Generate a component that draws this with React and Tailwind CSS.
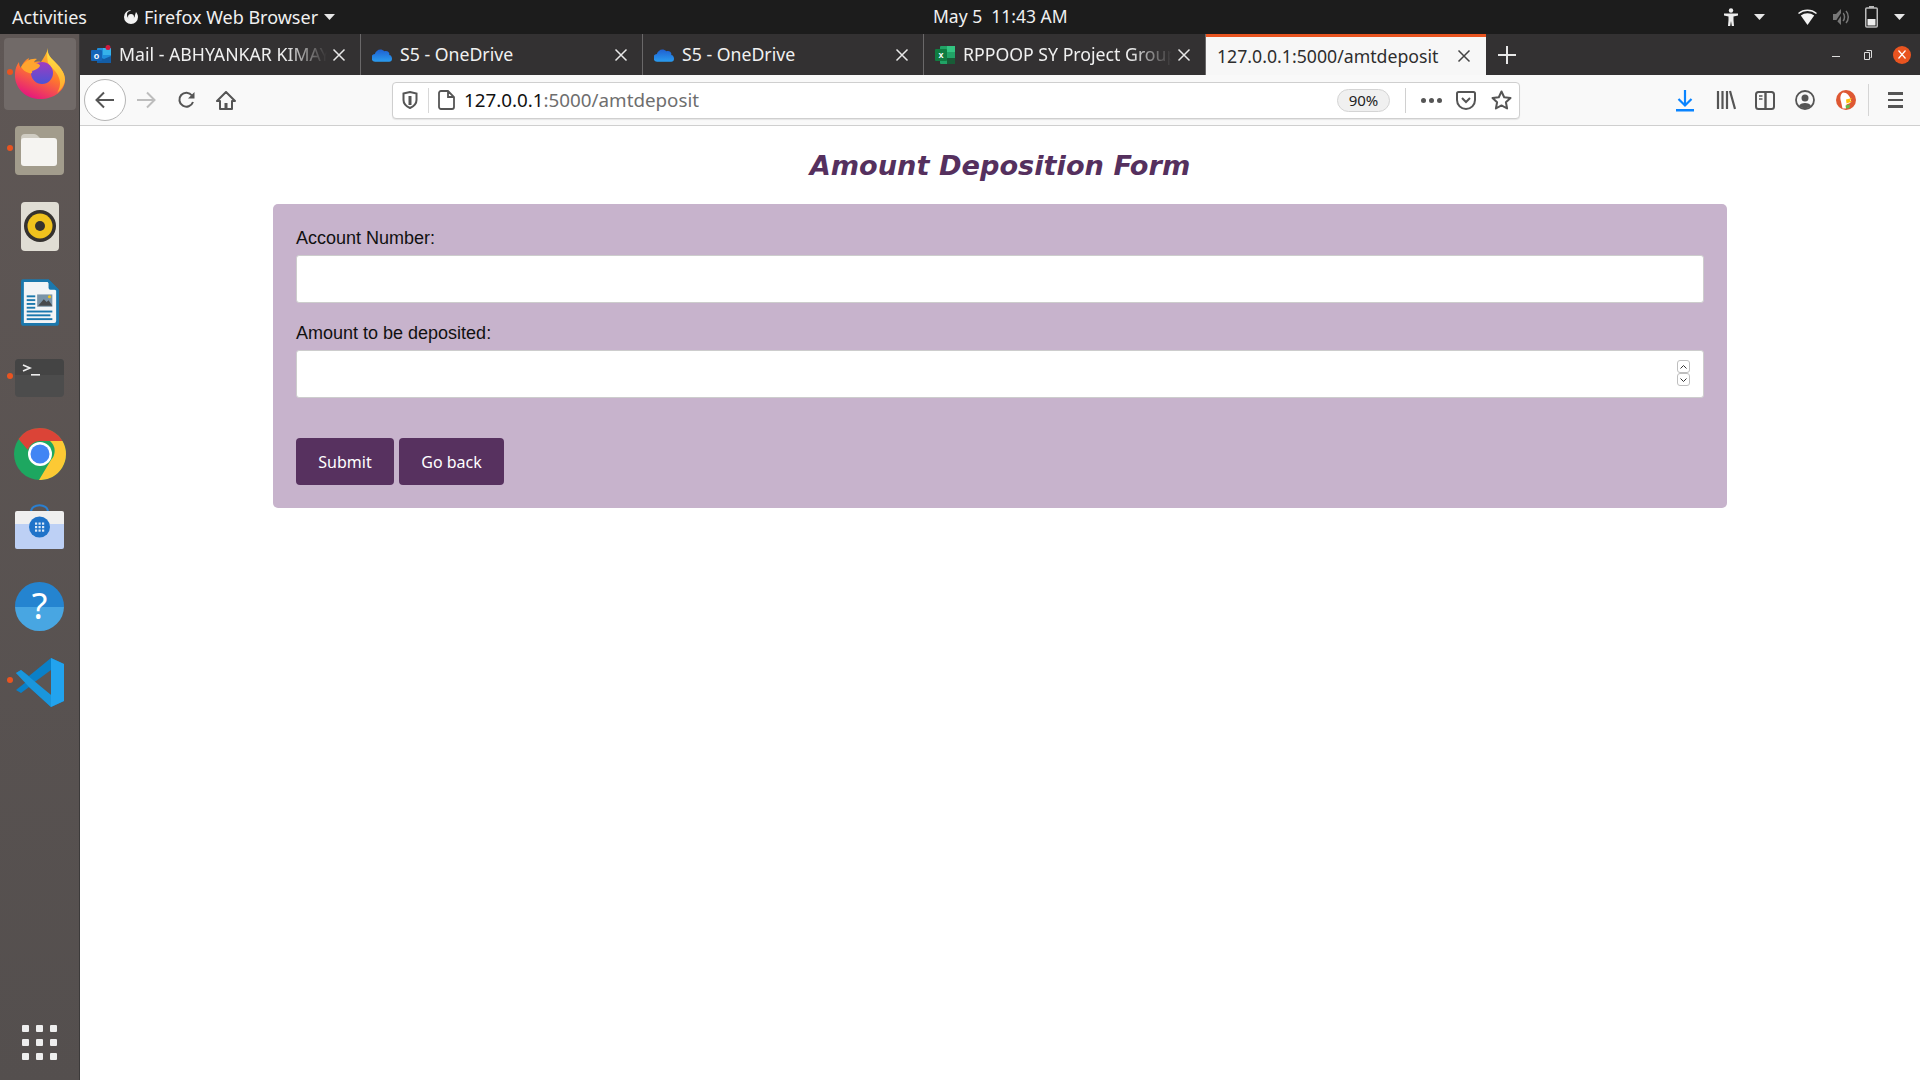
import React from 'react';

const uiFont = "font-['Noto_Sans',sans-serif]";

// dock icons
const FirefoxIcon = () => (
  <svg width="50" height="52" viewBox="0 0 50 52">
    <defs>
      <linearGradient id="ffBody" x1="0.8" y1="0" x2="0.35" y2="1">
        <stop offset="0" stopColor="#ffd02e" />
        <stop offset="0.5" stopColor="#ff7a2b" />
        <stop offset="1" stopColor="#e5177e" />
      </linearGradient>
      <linearGradient id="ffTop" x1="0.5" y1="0" x2="0.5" y2="1">
        <stop offset="0" stopColor="#ffe84a" />
        <stop offset="1" stopColor="#ffa52a" />
      </linearGradient>
      <linearGradient id="ffGlobe" x1="0.5" y1="0" x2="0.5" y2="1">
        <stop offset="0" stopColor="#a03cc0" />
        <stop offset="1" stopColor="#4b53d6" />
      </linearGradient>
    </defs>
    <path d="M33 1c-1 6 2 9 6 13 5 5 11 11 11 19 0 11-11 19-25 19C11 52 1 42 0 30c-.4-6 1-11 4-15 0 3 1 5 2 6 1-4 4-8 8-10-1 3 0 5 1 6 3-2 7-3 11-2 3-5 6-9 7-14z" fill="url(#ffBody)" />
    <path d="M33 1c-1 6 2 9 6 13 5 5 11 11 11 19-1 6-4 10-8 13 3-5 4-10 2-15-2-7-8-10-11-15-1-5-1-10 0-15z" fill="url(#ffTop)" />
    <circle cx="27" cy="26" r="11" fill="url(#ffGlobe)" />
    <path d="M6 20c4-6 10-9 16-8-2 1-3 3-3 4 3 0 6 1 6 3-2 3-5 4-8 5 1 2-1 3-3 2-4-1-6-3-8-6z" fill="#ffa52e" />
  </svg>
);

const FilesIcon = () => (
  <div className="w-[49px] h-[49px] rounded bg-[#a29c8c] flex items-center justify-center">
    <svg width="37" height="33" viewBox="0 0 37 33">
      <path d="M0 4a4 4 0 0 1 4-4h9c2 0 3 1 4 2l3 3H4a4 4 0 0 0-4 3z" fill="#cfccc2" />
      <rect x="0" y="4" width="36" height="28" rx="3" fill="#f5f4f1" />
    </svg>
  </div>
);

const RhythmboxIcon = () => (
  <div className="w-[38px] h-[49px] rounded bg-[#e0ddd4] flex items-center justify-center">
    <svg width="32" height="32" viewBox="0 0 32 32">
      <circle cx="16" cy="16" r="16" fill="#35322f" />
      <circle cx="16" cy="16" r="12.5" fill="#f0c21d" />
      <circle cx="16" cy="16" r="5" fill="#35322f" />
    </svg>
  </div>
);

const WriterIcon = () => (
  <svg width="38" height="49" viewBox="0 0 40 49">
    <path d="M2 0h27l11 11v35a3 3 0 0 1-3 3H3a3 3 0 0 1-3-3V2a2 2 0 0 1 2-2z" fill="#1b78ad" />
    <path d="M3 3h25l9 9v32a2 2 0 0 1-2 2H3z" fill="#f2f4f6" />
    <path d="M29 0l11 11h-9a2 2 0 0 1-2-2z" fill="#1b78ad" />
    <rect x="6" y="17" width="9" height="2" fill="#1b78ad" />
    <rect x="6" y="21" width="9" height="2" fill="#1b78ad" />
    <rect x="6" y="25" width="9" height="2" fill="#1b78ad" />
    <rect x="6" y="29" width="9" height="2" fill="#1b78ad" />
    <rect x="17" y="16" width="16" height="13" fill="#7a94a8" />
    <path d="M18 28l6-7 3 3 2-2 4 6z" fill="#46494c" />
    <circle cx="30" cy="18.5" r="1.6" fill="#f0c21d" />
    <rect x="6" y="33" width="27" height="2" fill="#1b78ad" />
    <rect x="6" y="37" width="25" height="2" fill="#1b78ad" />
    <rect x="6" y="41" width="27" height="2" fill="#1b78ad" />
  </svg>
);

const TerminalIcon = () => (
  <div className="w-[49px] h-[38px] rounded bg-[#4c4c4c] overflow-hidden relative">
    <div className="h-[16px] bg-[#444444]" />
    <svg className="absolute left-0 top-0" width="49" height="20" viewBox="0 0 49 20">
      <path d="M8 6l7 3-7 3" fill="none" stroke="#eee" strokeWidth="1.6" />
      <rect x="16" y="15" width="9" height="1.6" fill="#eee" />
    </svg>
  </div>
);

const ChromeIcon = () => (
  <svg width="52" height="52" viewBox="0 0 52 52">
    <circle cx="26" cy="26" r="26" fill="#1da760" />
    <path d="M26 0a26 26 0 0 1 22.5 13H26a13 13 0 0 0-12.300 8.700L4.500 11A26 26 0 0 1 26 0z" fill="#db4437" />
    <path d="M48.500 13A26 26 0 0 1 25 52l12-20a13 13 0 0 0-1-19z" fill="#fcc934" />
    <circle cx="26" cy="26" r="12" fill="#fff" />
    <circle cx="26" cy="26" r="9.500" fill="#4285f4" />
  </svg>
);

const SoftwareIcon = () => (
  <svg className="mb-[8px]" width="49" height="46" viewBox="0 0 49 46">
    <path d="M16 9c0-9 17-9 17 0" fill="none" stroke="#2a7fd0" strokeWidth="2" />
    <path d="M2 8h45a2 2 0 0 1 2 2v11H0V10a2 2 0 0 1 2-2z" fill="#efefef" />
    <path d="M0 21h49v23a2 2 0 0 1-2 2H2a2 2 0 0 1-2-2z" fill="#bdd0f5" />
    <circle cx="24.500" cy="24" r="10.500" fill="#1f73c9" />
    {[0, 1, 2].map((r) =>
      [0, 1, 2].map((c) => (
        <rect key={r + '-' + c} x={20 + c * 3.500} y={19.500 + r * 3.500} width="2.200" height="2.200" fill="#dce9f8" />
      ))
    )}
  </svg>
);

const HelpIcon = () => (
  <div className="w-[49px] h-[49px] rounded-full bg-gradient-to-b from-[#2484d0] from-50% to-[#48a6e2] to-50% flex items-center justify-center">
    <span className="text-white text-[36px] leading-none font-['Noto_Sans',sans-serif]">?</span>
  </div>
);

const VSCodeIcon = () => (
  <svg width="50" height="49" viewBox="0 0 50 49">
    <path d="M36 0l13 6v37l-13 6-22-20-8 6-5-3 10-8L1 15l5-3 8 6z" fill="#0a80c8" />
    <path d="M36 0l13 6v37l-13 6z" fill="#22a3ee" />
    <path d="M36 12L19 24.500 36 37z" fill="#5c5553" />
    <path d="M1 15l5-3 30 25v12L14 29z" fill="#1a96dc" />
  </svg>
);

const dockItems = [
  { key: 'firefox', icon: <FirefoxIcon />, running: true, active: true },
  { key: 'files', icon: <FilesIcon />, running: true },
  { key: 'music', icon: <RhythmboxIcon /> },
  { key: 'writer', icon: <WriterIcon /> },
  { key: 'terminal', icon: <TerminalIcon />, running: true },
  { key: 'chrome', icon: <ChromeIcon /> },
  { key: 'software', icon: <SoftwareIcon /> },
  { key: 'help', icon: <HelpIcon /> },
  { key: 'vscode', icon: <VSCodeIcon />, running: true },
];

const Dock = () => (
  <aside className="w-[80px] shrink-0 bg-gradient-to-b from-[#5f5755] to-[#544f4e] border-r border-[#3c3a3a] flex flex-col items-center pt-[2px] pb-[20px] h-full">
    {dockItems.map((item) => (
      <div key={item.key} className="relative w-[72px] h-[76px] flex items-center justify-center">
        {item.active && <div className="absolute inset-x-0 top-[2px] h-[72px] rounded bg-[#716a68]" />}
        {item.running && <div className="absolute left-[3px] top-[33px] w-[6px] h-[6px] rounded-full bg-[#e95420]" />}
        <div className={item.active ? 'relative -mt-[2px]' : 'relative'}>{item.icon}</div>
      </div>
    ))}
    <div className="mt-auto grid grid-cols-3 gap-[7px]">
      {Array.from({ length: 9 }).map((_, i) => (
        <div key={i} className="w-[7px] h-[7px] rounded-[1px] bg-[#eeeeee]" />
      ))}
    </div>
  </aside>
);

const Caret = ({ className = '' }) => (
  <svg className={className} width="11" height="6" viewBox="0 0 11 6">
    <path d="M0 0h11L5.500 6z" fill="#e6e6e6" />
  </svg>
);

const TopBar = () => (
  <header className={`h-[34px] shrink-0 bg-[#1c1c1c] flex items-center text-[#f0f0f0] text-[18px] relative ${uiFont}`}>
    <span className="ml-[12px] w-[111px]">Activities</span>
    <svg width="16" height="16" viewBox="0 0 16 16">
      <path d="M8 1a7 7 0 1 0 7 7c0-2-1-4-2-5l-1 3a4 4 0 1 1-5-4l1-1z" fill="#f2f2f2" />
      <circle cx="8" cy="8" r="3" fill="#f2f2f2" />
    </svg>
    <span className="ml-[5px]">Firefox Web Browser</span>
    <Caret className="ml-[6px]" />
    <span className="absolute left-[933px] top-[3px] text-[17.5px]">May 5&nbsp;&nbsp;11:43 AM</span>
    <div className="ml-auto flex items-center mr-[15px]">
      <svg width="14" height="18" viewBox="0 0 14 18">
        <circle cx="7" cy="2.500" r="2.200" fill="#eee" />
        <path d="M0 5.500h14v2L9.500 8.500v3.500l.5 6H7.800L7 13l-.8 5H4l.5-6V8.500L0 7.500z" fill="#eee" />
      </svg>
      <Caret className="ml-[16px]" />
      <svg className="ml-[33px]" width="19" height="16" viewBox="0 0 19 16">
        <path d="M.5 4.500a14 14 0 0 1 18 0" fill="none" stroke="#f2f2f2" strokeWidth="1.500" />
        <path d="M2.800 6.500a11 11 0 0 1 13.400 0L9.500 16z" fill="#f2f2f2" />
      </svg>
      <svg className="ml-[15px]" width="18" height="18" viewBox="0 0 18 18">
        <path d="M1 6h3l5-5v16l-5-5H1z" fill="#777" />
        <path d="M11 5c2 2 2 6 0 8M14 3c3 3 3 9 0 12" fill="none" stroke="#777" strokeWidth="1.500" />
        <path d="M2 17L12 2" stroke="#1c1c1c" strokeWidth="1.500" />
      </svg>
      <svg className="ml-[15px]" width="13" height="22" viewBox="0 0 13 22">
        <rect x="4" y="0" width="5" height="2" fill="#bbb" />
        <rect x="0.750" y="2" width="11.500" height="19" rx="1" fill="none" stroke="#bbb" strokeWidth="1.500" />
        <rect x="2.500" y="13" width="8" height="6.500" fill="#eee" />
      </svg>
      <Caret className="ml-[16px]" />
    </div>
  </header>
);

const CloseX = ({ color = '#e8e8e8' }) => (
  <svg width="14" height="14" viewBox="0 0 14 14">
    <path d="M1.500 1.500l11 11M12.500 1.500l-11 11" stroke={color} strokeWidth="1.500" fill="none" />
  </svg>
);

const OutlookIcon = () => (
  <svg width="20" height="20" viewBox="0 0 20 20">
    <rect x="6" y="3" width="14" height="15" rx="1" fill="#1f8ddb" />
    <rect x="12" y="3" width="8" height="7" fill="#36b2ea" />
    <path d="M6 11l7 3 7-3v7H6z" fill="#135da6" />
    <rect x="0" y="5" width="11" height="11" rx="1" fill="#1565b8" />
    <text x="5.500" y="13.500" fontSize="9" fontWeight="700" fill="#fff" textAnchor="middle" fontFamily="Liberation Sans">o</text>
    <circle cx="17" cy="2.500" r="2.500" fill="#d1193e" />
  </svg>
);

const OneDriveIcon = ({ id }) => (
  <svg width="21" height="14" viewBox="0 0 21 14">
    <defs>
      <linearGradient id={id} x1="0" y1="0" x2="0" y2="1">
        <stop offset="0" stopColor="#1f5fd0" />
        <stop offset="1" stopColor="#2a9cf0" />
      </linearGradient>
    </defs>
    <path d="M4 14a4 4 0 0 1-1-8c1-4 6-7 10-3 4-1 6 2 5 4 2 0 3 2 3 4s-1 3-3 3z" fill={`url(#${id})`} />
  </svg>
);

const ExcelIcon = () => (
  <svg width="20" height="20" viewBox="0 0 20 20">
    <rect x="5" y="1" width="15" height="18" rx="1" fill="#21a366" />
    <rect x="12" y="1" width="8" height="6" fill="#33c481" />
    <rect x="12" y="13" width="8" height="6" fill="#185c37" />
    <rect x="0" y="4" width="12" height="12" rx="1" fill="#107c41" />
    <text x="6" y="13" fontSize="9" fontWeight="700" fill="#fff" textAnchor="middle" fontFamily="Liberation Sans">x</text>
  </svg>
);

const tabs = [
  { title: 'Mail - ABHYANKAR KIMAYA', icon: <OutlookIcon />, fade: true, width: 'w-[281px]' },
  { title: 'S5 - OneDrive', icon: <OneDriveIcon id="od1" />, width: 'w-[282px]' },
  { title: 'S5 - OneDrive', icon: <OneDriveIcon id="od2" />, width: 'w-[281px]' },
  { title: 'RPPOOP SY Project Group', icon: <ExcelIcon />, fade: true, width: 'w-[282px]' },
];

const TabBar = () => (
  <div className={`h-[41px] shrink-0 bg-[#333132] flex items-stretch text-[17.7px] ${uiFont}`}>
    {tabs.map((t, i) => (
      <div key={i} className={`${t.width} flex items-center pl-[11px] pr-[14px] border-r border-[#6a6869] text-[#f0f0f0]`}>
        <div className="w-[20px] flex justify-center shrink-0">{t.icon}</div>
        <span className={`ml-[8px] mr-[5px] flex-1 overflow-hidden whitespace-nowrap ${t.fade ? '[mask-image:linear-gradient(to_right,black_80%,transparent)]' : ''}`}>
          {t.title}
        </span>
        <CloseX />
      </div>
    ))}
    <div className="w-[280px] bg-[#f7f7f7] border-t-[3px] border-[#e95420] flex items-center pl-[11px] pr-[15px] text-[#2e2e2e]">
      <span className="flex-1 whitespace-nowrap">127.0.0.1:5000/amtdeposit</span>
      <CloseX color="#444" />
    </div>
    <div className="w-[42px] flex items-center justify-center">
      <svg width="18" height="18" viewBox="0 0 18 18">
        <path d="M9 0v18M0 9h18" stroke="#e8e8e8" strokeWidth="2" />
      </svg>
    </div>
    <div className="ml-auto flex items-center pr-[9px]">
      <div className="w-[8px] h-[1.5px] bg-[#ddd] mt-[4px]" />
      <svg className="ml-[24px]" width="8" height="10" viewBox="0 0 8 10">
        <path d="M2.500.5h5v7h-1M.5 2.500h5v7h-5z" fill="none" stroke="#ddd" />
      </svg>
      <div className="ml-[21px] w-[18px] h-[18px] rounded-full bg-[#e95420] flex items-center justify-center">
        <CloseXSmall />
      </div>
    </div>
  </div>
);

const CloseXSmall = () => (
  <svg width="8" height="9" viewBox="0 0 8 9">
    <path d="M.5.5l7 8M7.500.5l-7 8" stroke="#fff" strokeWidth="1.200" />
  </svg>
);

const ico = '#555';

const Toolbar = () => (
  <div className={`h-[51px] shrink-0 bg-[#f9f9f9] border-b border-[#cfcfcf] flex items-center ${uiFont}`}>
    <div className="ml-[4px] w-[42px] h-[42px] rounded-full border border-[#b5b5b5] bg-white flex items-center justify-center">
      <svg width="20" height="18" viewBox="0 0 20 18">
        <path d="M19 9H2M9 1.500L1.500 9 9 16.500" fill="none" stroke={ico} strokeWidth="2" />
      </svg>
    </div>
    <svg className="ml-[10px]" width="20" height="18" viewBox="0 0 20 18">
      <path d="M1 9h17M11 1.500L18.500 9 11 16.500" fill="none" stroke="#bdbdbd" strokeWidth="2" />
    </svg>
    <svg className="ml-[21px]" width="19" height="19" viewBox="0 0 19 19">
      <path d="M16 11a7 7 0 1 1-1-6.500" fill="none" stroke={ico} strokeWidth="2" />
      <path d="M17.500 1v6.500H11z" fill={ico} />
    </svg>
    <svg className="ml-[20px]" width="20" height="19" viewBox="0 0 20 19">
      <path d="M10 1L1 10h3v8h12v-8h3z" fill="none" stroke={ico} strokeWidth="2" strokeLinejoin="round" />
      <rect x="8.500" y="12" width="3" height="6" fill={ico} />
    </svg>
    <div className="ml-[156px] w-[1128px] h-[37px] bg-white border border-[#cfcfcf] rounded-[4px] flex items-center shadow-[0_1px_1px_rgba(0,0,0,0.08)]">
      <svg className="ml-[9px]" width="16" height="18" viewBox="0 0 16 18">
        <path d="M1.500 2.500L8 1l6.500 1.500V9c0 4-3 6.500-6.500 8-3.500-1.500-6.500-4-6.500-8z" fill="none" stroke={ico} strokeWidth="2" />
        <path d="M8 5v9" stroke={ico} strokeWidth="3" />
      </svg>
      <div className="ml-[10px] w-px h-[25px] bg-[#d8d8d8]" />
      <svg className="ml-[9px]" width="17" height="20" viewBox="0 0 17 20">
        <path d="M3 1h7l6 6v10a2 2 0 0 1-2 2H3a2 2 0 0 1-2-2V3a2 2 0 0 1 2-2zM10 1v6h6" fill="none" stroke={ico} strokeWidth="1.800" />
      </svg>
      <div className="ml-[9px] text-[18.800px] leading-none text-[#111] whitespace-nowrap">
        127.0.0.1<span className="text-[#6e6e6e]">:5000/amtdeposit</span>
      </div>
      <div className="ml-auto w-[53px] h-[23px] rounded-full bg-[#f0f0f0] border border-[#d4d4d4] flex items-center justify-center text-[15px] text-[#222]">
        90%
      </div>
      <div className="ml-[15px] w-px h-[25px] bg-[#d0d0d0]" />
      <div className="ml-[15px] flex gap-[3px]">
        <div className="w-[5px] h-[5px] rounded-full bg-[#555]" />
        <div className="w-[5px] h-[5px] rounded-full bg-[#555]" />
        <div className="w-[5px] h-[5px] rounded-full bg-[#555]" />
      </div>
      <svg className="ml-[14px]" width="20" height="19" viewBox="0 0 20 19">
        <path d="M2.500 1h15A1.500 1.500 0 0 1 19 2.500V9c0 5-4 9-9 9s-9-4-9-9V2.500A1.500 1.500 0 0 1 2.500 1z" fill="none" stroke={ico} strokeWidth="2" />
        <path d="M6 7l4 4 4-4" fill="none" stroke={ico} strokeWidth="2" />
      </svg>
      <svg className="ml-[15px] mr-[7px]" width="21" height="20" viewBox="0 0 21 20">
        <path d="M10.500 1.500l2.700 5.700 6.300.8-4.600 4.300 1.200 6.200-5.600-3.100-5.600 3.100 1.200-6.200L1.500 8l6.300-.8z" fill="none" stroke={ico} strokeWidth="2" strokeLinejoin="round" />
      </svg>
    </div>
    <svg className="ml-[156px]" width="18" height="23" viewBox="0 0 18 23">
      <path d="M9 1v15M2.500 10L9 16.500 15.500 10" fill="none" stroke="#0a84ff" strokeWidth="2.200" />
      <rect x="0" y="20" width="18" height="2.500" fill="#0a84ff" />
    </svg>
    <svg className="ml-[22px]" width="20" height="20" viewBox="0 0 20 20">
      <path d="M2 1v18M6.500 1v18M11 1v18M14 1l5 18" fill="none" stroke={ico} strokeWidth="2.200" />
    </svg>
    <svg className="ml-[19px]" width="20" height="19" viewBox="0 0 20 19">
      <rect x="1" y="1" width="18" height="17" rx="2.500" fill="none" stroke={ico} strokeWidth="2" />
      <path d="M10.500 1v17" stroke={ico} strokeWidth="2.400" />
      <path d="M4 5h3.500M4 8h3.500" stroke={ico} strokeWidth="1.400" />
    </svg>
    <svg className="ml-[20px]" width="20" height="20" viewBox="0 0 20 20">
      <circle cx="10" cy="10" r="9" fill="none" stroke={ico} strokeWidth="1.800" />
      <circle cx="10" cy="8" r="3.500" fill={ico} />
      <path d="M4 16c1-4 11-4 12 0-3 3-9 3-12 0z" fill={ico} />
    </svg>
    <svg className="ml-[21px]" width="20" height="20" viewBox="0 0 20 20">
      <circle cx="10" cy="10" r="10" fill="#de5833" />
      <path d="M7 2.500c-3 2-3 6-2 9l1.500 7h3.500l.5-4c3-1 5-2 4.500-4C14 6 11 2.500 7 2.500z" fill="#fff" />
      <path d="M10 9.500l6-1.500-2 2.500 2 1-5.500 2z" fill="#fdc10a" />
      <path d="M9.500 15.500l4.500-1-.5 3.500-3.500.5z" fill="#65bc46" />
    </svg>
    <div className="ml-[12px] w-px h-[32px] bg-[#d5d5d5]" />
    <div className="ml-[19px] flex flex-col gap-[4px]">
      <div className="w-[15px] h-[2.500px] bg-[#555]" />
      <div className="w-[15px] h-[2.500px] bg-[#555]" />
      <div className="w-[15px] h-[2.500px] bg-[#555]" />
    </div>
  </div>
);

const labelClass = "block text-[18px] leading-[21px] text-[#111] font-['Liberation_Sans',sans-serif]";
const inputClass = 'w-full h-[48px] bg-white border border-[#cdcdcd] rounded-[3px] px-3 outline-none';
const buttonClass = "h-[47px] bg-[#57315f] text-white text-[16px] rounded-[4px] font-['Noto_Sans',sans-serif]";

const Spinner = () => (
  <div className="absolute right-[14px] top-[10px] flex flex-col">
    <div className="w-[13px] h-[13px] border border-[#bfbfbf] rounded-[3px] flex items-center justify-center">
      <svg width="7" height="4" viewBox="0 0 7 4"><path d="M.5 3.500l3-3 3 3" fill="none" stroke="#333" /></svg>
    </div>
    <div className="w-[13px] h-[13px] border border-[#bfbfbf] rounded-[3px] flex items-center justify-center">
      <svg width="7" height="4" viewBox="0 0 7 4"><path d="M.5.5l3 3 3-3" fill="none" stroke="#333" /></svg>
    </div>
  </div>
);

const DepositForm = () => (
  <main className="flex-1 bg-white flex flex-col items-center">
    <h1 className="mt-[23px] text-[27.200px] leading-[33px] font-bold italic text-[#55305e] font-['DejaVu_Sans',sans-serif]">
      Amount Deposition Form
    </h1>
    <form className="mt-[22px] w-[1454px] h-[304px] bg-[#c7b3cc] rounded-[5px] px-[23px] pt-[24px]">
      <label className={labelClass}>Account Number:</label>
      <input type="text" className={`${inputClass} mt-[6px]`} />
      <label className={`${labelClass} mt-[20px]`}>Amount to be deposited:</label>
      <div className="relative mt-[6px]">
        <input type="text" className={inputClass} />
        <Spinner />
      </div>
      <div className="mt-[40px] flex gap-[5px]">
        <button type="button" className={`${buttonClass} w-[98px]`}>Submit</button>
        <button type="button" className={`${buttonClass} w-[105px]`}>Go back</button>
      </div>
    </form>
  </main>
);

export default function App() {
  return (
    <div className="w-[1920px] h-[1080px] flex flex-col overflow-hidden bg-white">
      <TopBar />
      <div className="flex-1 flex min-h-0">
        <Dock />
        <div className="flex-1 flex flex-col min-w-0">
          <TabBar />
          <Toolbar />
          <DepositForm />
        </div>
      </div>
    </div>
  );
}
